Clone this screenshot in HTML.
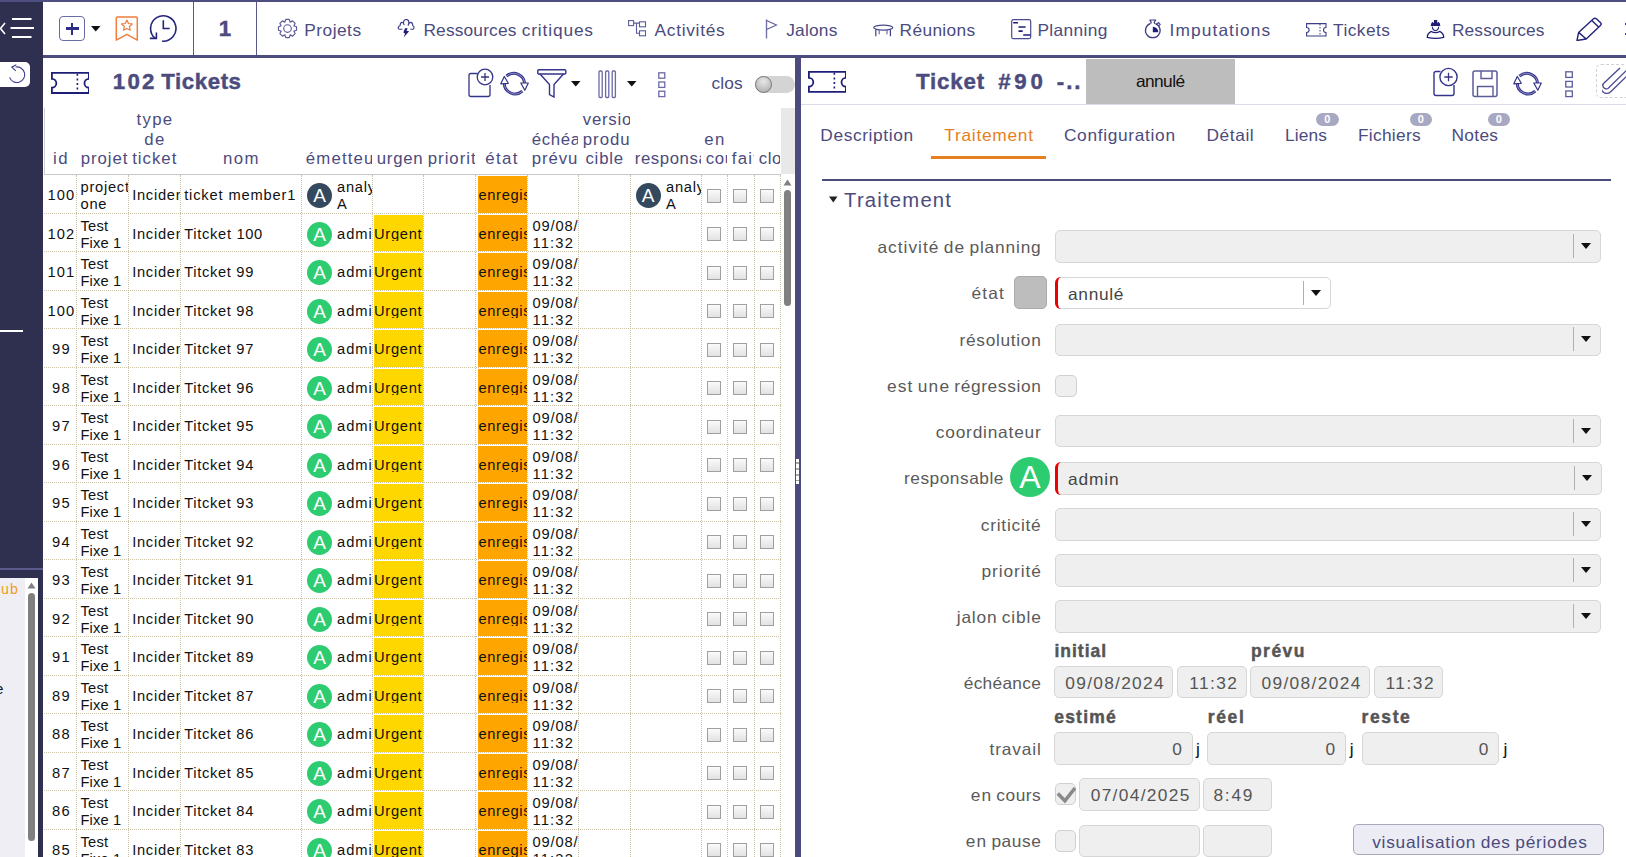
<!DOCTYPE html>
<html><head><meta charset="utf-8"><style>
*{box-sizing:border-box}
html,body{margin:0;padding:0}
body{width:1626px;height:857px;overflow:hidden;position:relative;background:#fff;font-family:"Liberation Sans",sans-serif}
.ab{position:absolute}
.tx{position:absolute;white-space:nowrap}
.clip{position:absolute;overflow:hidden;white-space:nowrap}
.inp{position:absolute;background:#efefef;border:1px solid #d6d6d6;border-radius:5px}
.dd{position:absolute;width:1px;background:#b4b4b4}
.tri{position:absolute;width:0;height:0;border-left:5px solid transparent;border-right:5px solid transparent;border-top:6px solid #111}
.cb{position:absolute;width:14px;height:14px;border:1px solid #a0a0a0;background:linear-gradient(#fafafa,#e2e2e2)}
.av{position:absolute;border-radius:50%;color:#fff;text-align:center;font-family:"Liberation Sans",sans-serif}
</style></head><body>
<div class="ab" style="left:0px;top:0px;width:43px;height:857px;background:#2f2f50"></div>
<div class="ab" style="left:0px;top:0px;width:1626px;height:2px;background:#4e4e80"></div>
<div class="ab" style="left:43px;top:55px;width:1583px;height:3px;background:#4b4b7e"></div>
<div class="ab" style="left:193px;top:2px;width:1.1999999999999886px;height:53px;background:#5a5a8a"></div>
<div class="ab" style="left:256px;top:2px;width:1.1999999999999886px;height:53px;background:#5a5a8a"></div>
<svg class="ab" style="left:0px;top:18px" width="36" height="22" viewBox="0 0 36 22" fill="none"><path d="M5 5 L0.5 10.5 L5 16" stroke="#fff" stroke-width="1.6"/><path d="M12 1 H31.5 M10.5 10 H34 M12 19 H31.5" stroke="#fff" stroke-width="2"/></svg>
<div class="ab" style="left:-5px;top:62px;width:35px;height:25px;background:#fff;border-radius:5px"></div>
<svg class="ab" style="left:7px;top:64px" width="20" height="22" viewBox="0 0 20 22" fill="none"><path d="M2.6 13.4 A7.8 7.8 0 1 0 8.6 3" stroke="#3f3f8f" stroke-width="1.1"/><path d="M9.3 0.8 L4.8 3.2 L8.8 6.8" stroke="#3f3f8f" stroke-width="1.1"/></svg>
<div class="ab" style="left:0px;top:329.5px;width:23px;height:2.0px;background:#fff"></div>
<div class="ab" style="left:0px;top:568px;width:43px;height:2px;background:#5a5a8c"></div>
<div class="ab" style="left:0px;top:578px;width:38px;height:279px;background:#efeef5"></div>
<div class="ab" style="left:25px;top:578px;width:13px;height:279px;background:#fff"></div>
<svg class="ab" style="left:27px;top:582px" width="9" height="7" viewBox="0 0 9 7" fill="none"><path d="M0.5 6.5 L4.5 0.5 L8.5 6.5Z" fill="#808080"/></svg>
<div class="ab" style="left:28.3px;top:593px;width:6.699999999999999px;height:248px;background:#808080;border-radius:4px"></div>
<div class="tx" style="left:0.90px;top:582.20px;font-size:14.18px;line-height:14.18px;color:#f39c12;letter-spacing:1.336px;">ub</div>
<div class="tx" style="left:-4.57px;top:681.60px;font-size:14.18px;line-height:14.18px;color:#111;letter-spacing:0.000px;">e</div>
<div class="ab" style="left:59px;top:16px;width:26px;height:24.5px;border:1.5px solid #6b6ba6;border-radius:4px"></div>
<div class="ab" style="left:66px;top:27.3px;width:12.5px;height:2.3999999999999986px;background:#2d2d85"></div>
<div class="ab" style="left:71px;top:22.5px;width:2.4000000000000057px;height:12.0px;background:#2d2d85"></div>
<svg class="ab" style="left:91px;top:26px" width="10" height="6" viewBox="0 0 10 6" fill="none"><path d="M0 0 H9.5 L4.75 5.5Z" fill="#111"/></svg>
<svg class="ab" style="left:115px;top:15px" width="24" height="27" viewBox="0 0 24 27" fill="none"><path d="M1.3 3 Q1.3 1.9 2.4 1.9 H21.2 Q22.3 1.9 22.3 3 V25.2 L11.9 19.4 L1.3 25.2 Z" stroke="#f07d3e" stroke-width="1.5" stroke-linejoin="round"/><path d="M11.90 5.10 L13.49 8.52 L17.23 8.97 L14.47 11.53 L15.19 15.23 L11.90 13.40 L8.61 15.23 L9.33 11.53 L6.57 8.97 L10.31 8.52 Z" stroke="#f07d3e" stroke-width="1.2" stroke-linejoin="round"/></svg>
<svg class="ab" style="left:149px;top:14px" width="30" height="29" viewBox="0 0 30 29" fill="none"><path d="M13.2 27.15 A12.7 12.7 0 1 0 6.14 24.23" stroke="#23237a" stroke-width="1.6"/><path d="M14.3 6.3 V14.5 H20.7" stroke="#23237a" stroke-width="1.6"/><path d="M7.4 18.6 V24.4 H0.8" stroke="#23237a" stroke-width="1.6"/></svg>
<div class="tx" style="left:218.82px;top:18.16px;font-size:22.26px;line-height:22.26px;color:#4b4b7e;letter-spacing:0.000px;font-weight:bold;-webkit-text-stroke:0.45px #4b4b7e;">1</div>
<div class="tx" style="left:304.30px;top:21.74px;font-size:17.32px;line-height:17.32px;color:#4b4b7e;letter-spacing:0.482px;">Projets</div>
<div class="tx" style="left:423.40px;top:21.74px;font-size:17.32px;line-height:17.32px;color:#4b4b7e;letter-spacing:0.181px;">Ressources</div>
<div class="tx" style="left:521.75px;top:21.74px;font-size:17.32px;line-height:17.32px;color:#4b4b7e;letter-spacing:0.851px;">critiques</div>
<div class="tx" style="left:654.60px;top:21.74px;font-size:17.32px;line-height:17.32px;color:#4b4b7e;letter-spacing:0.703px;">Activités</div>
<div class="tx" style="left:786.20px;top:21.74px;font-size:17.32px;line-height:17.32px;color:#4b4b7e;letter-spacing:0.229px;">Jalons</div>
<div class="tx" style="left:899.60px;top:21.74px;font-size:17.32px;line-height:17.32px;color:#4b4b7e;letter-spacing:0.346px;">Réunions</div>
<div class="tx" style="left:1037.40px;top:21.74px;font-size:17.32px;line-height:17.32px;color:#4b4b7e;letter-spacing:0.383px;">Planning</div>
<div class="tx" style="left:1169.50px;top:21.74px;font-size:17.32px;line-height:17.32px;color:#4b4b7e;letter-spacing:1.116px;">Imputations</div>
<div class="tx" style="left:1333.10px;top:21.74px;font-size:17.32px;line-height:17.32px;color:#4b4b7e;letter-spacing:0.448px;">Tickets</div>
<div class="tx" style="left:1452.00px;top:21.74px;font-size:17.32px;line-height:17.32px;color:#4b4b7e;letter-spacing:0.117px;">Ressources</div>
<svg class="ab" style="left:276.5px;top:18.4px" width="21" height="21" viewBox="0 0 21 21" fill="none"><path d="M7.80 4.15 L8.74 1.47 L12.26 1.47 L13.20 4.15 L13.08 4.10 L15.64 2.87 L18.13 5.36 L16.90 7.92 L16.85 7.80 L19.53 8.74 L19.53 12.26 L16.85 13.20 L16.90 13.08 L18.13 15.64 L15.64 18.13 L13.08 16.90 L13.20 16.85 L12.26 19.53 L8.74 19.53 L7.80 16.85 L7.92 16.90 L5.36 18.13 L2.87 15.64 L4.10 13.08 L4.15 13.20 L1.47 12.26 L1.47 8.74 L4.15 7.80 L4.10 7.92 L2.87 5.36 L5.36 2.87 L7.92 4.10 Z" stroke="#5c5c9a" stroke-width="1.2" stroke-linejoin="round"/><circle cx="10.5" cy="10.5" r="3.8" stroke="#5c5c9a" stroke-width="1.15"/></svg>
<svg class="ab" style="left:397px;top:19px" width="18" height="20" viewBox="0 0 18 20" fill="none"><path d="M5.4 10.2 H2.2 Q1.2 10.2 1.2 8.6 Q1.3 7 3 6.8 Q3.3 3.3 5 3.3 Q6.5 3.4 7.3 6.2 M6.5 4.2 Q6.6 0.5 9.2 0.5 Q11.8 0.5 11.9 3.6 L11.2 6.2 Q12.3 3.3 13.8 3.4 Q15.6 3.6 15.8 6.8 Q17 7 17 8.6 Q17 10.2 16 10.2 H13.3" stroke="#3d3d85" stroke-width="1.15" stroke-linejoin="round"/><path d="M8.05 9.2 H10.7 L9.45 11.8 L12.1 12.15 L6.65 18.45 L8.05 14.6 L6.3 13.55 Z" fill="#1e1e78"/></svg>
<svg class="ab" style="left:628px;top:20px" width="20" height="17" viewBox="0 0 20 17" fill="none"><rect x="0.6" y="0.6" width="5" height="5" stroke="#5c5c9a" stroke-width="1.1"/><rect x="11.5" y="1.8" width="6" height="5" stroke="#5c5c9a" stroke-width="1.1"/><rect x="11.5" y="10.8" width="6" height="5" stroke="#5c5c9a" stroke-width="1.1"/><path d="M5.6 3.1 H11.5 M8.5 3.1 V13.3 H11.5" stroke="#5c5c9a" stroke-width="1.1"/></svg>
<svg class="ab" style="left:765px;top:19px" width="13" height="20" viewBox="0 0 13 20" fill="none"><path d="M1.5 0.5 V19.5" stroke="#7373a8" stroke-width="1.4"/><path d="M1.5 1.5 L11.5 6 L1.5 10.5" stroke="#5c5c9a" stroke-width="1.1"/></svg>
<svg class="ab" style="left:873px;top:23.5px" width="21" height="14" viewBox="0 0 21 14" fill="none"><ellipse cx="10.2" cy="3.6" rx="9.6" ry="2.5" stroke="#4a4a90" stroke-width="1.2"/><path d="M2.8 5.5 V12.3 M17.4 5.5 V12.3" stroke="#3d3d85" stroke-width="1.2"/><path d="M6.2 6 V10.2 M14 6 V10.2" stroke="#6a6aa6" stroke-width="1.2"/></svg>
<svg class="ab" style="left:1011px;top:19px" width="21" height="21" viewBox="0 0 21 21" fill="none"><rect x="0.7" y="0.7" width="19" height="19" rx="1.8" stroke="#4a4a90" stroke-width="1.2"/><path d="M2.2 3.75 H7 M7.5 7.95 H14.6 M7.5 12.15 H11.7 M12.2 16 H19.4" stroke="#1e1e78" stroke-width="1.6"/></svg>
<svg class="ab" style="left:1144px;top:19px" width="18" height="22" viewBox="0 0 18 22" fill="none"><path d="M6.2 4.6 A7.3 7.3 0 1 0 11.4 4.6" stroke="#3d3d85" stroke-width="1.3"/><path d="M5.6 1 H11.8 L10.2 3.2 L10.8 4.8 M5.6 1 L7.2 3.2 L6.6 4.8" stroke="#3d3d85" stroke-width="1.2" stroke-linejoin="round"/><path d="M12.5 5.2 L14.6 3.6 L16.2 5.4 L14.4 7.2" stroke="#4a4a90" stroke-width="1.1"/><path d="M8.8 13.2 V7.7 A5.5 5.5 0 0 1 14.3 13.2 Z" fill="#1e1e78"/></svg>
<svg class="ab" style="left:1305.5px;top:22.5px" width="21" height="14" viewBox="0 0 21 14" fill="none"><path d="M0.6 0.6 H20 V4.5 A2.5 2.5 0 0 0 20 9.5 V13 H0.6 V9.5 A2.5 2.5 0 0 0 0.6 4.5 Z" stroke="#3d3d85" stroke-width="1.1"/><path d="M14 1 V13" stroke="#3d3d85" stroke-width="1" stroke-dasharray="1.5 1.5"/></svg>
<svg class="ab" style="left:1425.5px;top:19px" width="19" height="21" viewBox="0 0 19 21" fill="none"><path d="M4.6 7 H14.4 Q14.2 3.6 12.3 2.7 L11.2 4.2 V0.9 H8 V4.2 L6.8 2.7 Q4.9 3.6 4.6 7 Z" fill="#1e1e78"/><path d="M6.3 7.6 Q6.7 11.4 9.5 11.6 Q12.3 11.4 12.7 7.6" stroke="#2b2b80" stroke-width="1.1"/><path d="M1.3 18.4 Q1.2 14.2 5.4 12.4 Q7 13.6 9.5 13.6 Q12 13.6 13.6 12.4 Q17.8 14.2 17.7 18.4 Q9.5 20.2 1.3 18.4 Z" stroke="#1e1e78" stroke-width="1.3" stroke-linejoin="round"/></svg>
<svg class="ab" style="left:1576px;top:16px" width="27" height="25" viewBox="0 0 27 25" fill="none"><path d="M1 24.5 L2.6 16.4 L17.5 2.8 Q19 1.5 20.4 2.8 L24.6 6.8 Q25.8 8.2 24.4 9.6 L10.2 23 Z M2.6 16.4 L10.2 23 M15.8 4.4 L22.9 11.3" stroke="#23237a" stroke-width="1.4" stroke-linejoin="round"/></svg>
<div class="ab" style="left:1624.6px;top:22.5px;width:1.400000000000091px;height:2.5px;background:#3d3d85"></div>
<div class="ab" style="left:1624.6px;top:32.5px;width:1.400000000000091px;height:2.5px;background:#3d3d85"></div>
<svg class="ab" style="left:50.6px;top:71.8px" width="38.8" height="21.9" viewBox="0 0 38.8 21.9" fill="none"><path d="M0.9 0.9 H37.9 V6.90 A4.43 4.43 0 0 0 37.9 15.77 V21.0 H0.9 V15.77 A4.43 4.43 0 0 0 0.9 6.90 Z" stroke="#1e1e78" stroke-width="1.8"/><path d="M26.38 1.8 V20.099999999999998" stroke="#1e1e78" stroke-width="1.62" stroke-dasharray="2 2.6"/></svg>
<div class="tx" style="left:112.80px;top:70.66px;font-size:22.26px;line-height:22.26px;color:#4b4b7e;letter-spacing:2.210px;font-weight:bold;-webkit-text-stroke:0.45px #4b4b7e;">102</div>
<div class="tx" style="left:161.27px;top:70.66px;font-size:22.26px;line-height:22.26px;color:#4b4b7e;letter-spacing:0.575px;font-weight:bold;-webkit-text-stroke:0.45px #4b4b7e;">Tickets</div>
<svg class="ab" style="left:468px;top:68px" width="26" height="30" viewBox="0 0 26 30" fill="none"><path d="M9.5 5.5 H3 A2 2 0 0 0 1 7.5 V26.5 A2 2 0 0 0 3 28.5 H20 A2 2 0 0 0 22 26.5 V17" stroke="#34348a" stroke-width="1.3"/><circle cx="17" cy="9" r="7.8" fill="#fff" stroke="#34348a" stroke-width="1.3"/><path d="M17 5 V13 M13 9 H21" stroke="#34348a" stroke-width="1.3"/></svg>
<svg class="ab" style="left:500px;top:70px" width="29" height="27" viewBox="0 0 29 27" fill="none"><path d="M6.5 6.2 A10.8 10.8 0 0 1 24.6 14.5" stroke="#34348a" stroke-width="3"/><path d="M6.5 6.2 A10.8 10.8 0 0 1 24.6 14.5" stroke="#9a9ad0" stroke-width="0.9"/><path d="M22.3 21.2 A10.8 10.8 0 0 1 4.4 12" stroke="#34348a" stroke-width="3"/><path d="M22.3 21.2 A10.8 10.8 0 0 1 4.4 12" stroke="#9a9ad0" stroke-width="0.9"/><path d="M0.8 13.8 L4.3 6.5 L8.3 13.3 Z" fill="#fff" stroke="#34348a" stroke-width="1.2" stroke-linejoin="round"/><path d="M20.8 13 L28.3 13 L24.8 20.2 Z" fill="#fff" stroke="#34348a" stroke-width="1.2" stroke-linejoin="round"/></svg>
<svg class="ab" style="left:536.5px;top:69px" width="30" height="29" viewBox="0 0 30 29" fill="none"><rect x="0.8" y="0.8" width="28" height="4.2" rx="1" stroke="#34348a" stroke-width="1.4"/><path d="M3 5 L12.5 15.5 V25.5 L17 28 V15.5 L26.5 5" stroke="#34348a" stroke-width="1.4"/></svg>
<svg class="ab" style="left:571px;top:81px" width="10" height="6" viewBox="0 0 10 6" fill="none"><path d="M0 0 H9.5 L4.75 5.5Z" fill="#111"/></svg>
<svg class="ab" style="left:597.5px;top:70px" width="19" height="29" viewBox="0 0 19 29" fill="none"><rect x="1" y="1" width="3.2" height="26.5" rx="1" stroke="#6a6aa6" stroke-width="1.3"/><rect x="7.6" y="1" width="3.2" height="26.5" rx="1" stroke="#6a6aa6" stroke-width="1.3"/><rect x="14.2" y="1" width="3.2" height="26.5" rx="1" stroke="#6a6aa6" stroke-width="1.3"/></svg>
<svg class="ab" style="left:626.5px;top:81px" width="10" height="6" viewBox="0 0 10 6" fill="none"><path d="M0 0 H9.5 L4.75 5.5Z" fill="#111"/></svg>
<svg class="ab" style="left:657.5px;top:71.5px" width="8" height="26" viewBox="0 0 8 26" fill="none"><rect x="0.8" y="0.8" width="6" height="5.4" stroke="#6a6aa6" stroke-width="1.3"/><rect x="0.8" y="10" width="6" height="5.4" stroke="#6a6aa6" stroke-width="1.3"/><rect x="0.8" y="19.2" width="6" height="5.4" stroke="#6a6aa6" stroke-width="1.3"/></svg>
<div class="tx" style="left:711.50px;top:75.04px;font-size:17.32px;line-height:17.32px;color:#4b4b7e;letter-spacing:0.138px;">clos</div>
<div class="ab" style="left:755px;top:76px;width:40px;height:17px;background:#d4d4d4;border-radius:9px"></div>
<div class="ab" style="left:755px;top:76px;width:17px;height:17px;background:radial-gradient(circle at 50% 30%,#e8e8e8,#a8a8a8);border:1px solid #777;border-radius:50%"></div>
<div class="ab" style="left:44px;top:107.7px;width:1px;height:67.3px;background:#d0d0d0"></div>
<div class="ab" style="left:44px;top:173.5px;width:737px;height:1.5px;background:#c8c8c8"></div>
<div class="ab" style="left:781px;top:107.7px;width:14px;height:66.3px;background:#e8e8e8"></div>
<div class="tx" style="left:53.00px;top:151.38px;font-size:16.8px;line-height:16.8px;color:#4b4b7e;letter-spacing:1.538px;">id</div>
<div class="clip" style="left:77.0px;width:51.0px;top:151.38px;font-size:16.8px;line-height:16.8px;color:#4b4b7e;letter-spacing:0.936px;text-align:left;padding-left:3.80px;">projet</div>
<div class="tx" style="left:136.42px;top:112.08px;font-size:16.8px;line-height:16.8px;color:#4b4b7e;letter-spacing:1.336px;">type</div>
<div class="tx" style="left:144.30px;top:131.78px;font-size:16.8px;line-height:16.8px;color:#4b4b7e;letter-spacing:1.310px;">de</div>
<div class="tx" style="left:132.14px;top:151.38px;font-size:16.8px;line-height:16.8px;color:#4b4b7e;letter-spacing:1.018px;">ticket</div>
<div class="tx" style="left:223.04px;top:151.38px;font-size:16.8px;line-height:16.8px;color:#4b4b7e;letter-spacing:1.422px;">nom</div>
<div class="clip" style="left:302.0px;width:70.0px;top:151.38px;font-size:16.8px;line-height:16.8px;color:#4b4b7e;letter-spacing:1.155px;text-align:left;padding-left:3.80px;">émetteur</div>
<div class="clip" style="left:373.0px;width:50.0px;top:151.38px;font-size:16.8px;line-height:16.8px;color:#4b4b7e;letter-spacing:0.745px;text-align:left;padding-left:3.80px;">urgence</div>
<div class="clip" style="left:424.0px;width:51.0px;top:151.38px;font-size:16.8px;line-height:16.8px;color:#4b4b7e;letter-spacing:0.965px;text-align:left;padding-left:3.80px;">priorité</div>
<div class="tx" style="left:485.20px;top:151.38px;font-size:16.8px;line-height:16.8px;color:#4b4b7e;letter-spacing:1.395px;">état</div>
<div class="clip" style="left:528.0px;width:50.0px;top:131.78px;font-size:16.8px;line-height:16.8px;color:#4b4b7e;letter-spacing:0.619px;text-align:left;padding-left:3.80px;">échéance</div>
<div class="clip" style="left:528.0px;width:50.0px;top:151.38px;font-size:16.8px;line-height:16.8px;color:#4b4b7e;letter-spacing:0.863px;text-align:left;padding-left:3.80px;">prévue</div>
<div class="clip" style="left:579.0px;width:51.0px;top:112.08px;font-size:16.8px;line-height:16.8px;color:#4b4b7e;letter-spacing:0.744px;text-align:left;padding-left:3.80px;">version</div>
<div class="clip" style="left:579.0px;width:51.0px;top:131.78px;font-size:16.8px;line-height:16.8px;color:#4b4b7e;letter-spacing:0.972px;text-align:left;padding-left:3.80px;">produit</div>
<div class="tx" style="left:585.46px;top:151.38px;font-size:16.8px;line-height:16.8px;color:#4b4b7e;letter-spacing:0.778px;">cible</div>
<div class="clip" style="left:631.0px;width:70.0px;top:151.38px;font-size:16.8px;line-height:16.8px;color:#4b4b7e;letter-spacing:0.556px;text-align:left;padding-left:3.80px;">responsable</div>
<div class="tx" style="left:704.30px;top:131.78px;font-size:16.8px;line-height:16.8px;color:#4b4b7e;letter-spacing:1.310px;">en</div>
<div class="clip" style="left:702.0px;width:25.0px;top:151.38px;font-size:16.8px;line-height:16.8px;color:#4b4b7e;letter-spacing:0.641px;text-align:left;padding-left:3.80px;">cours</div>
<div class="clip" style="left:728.0px;width:26.0px;top:151.38px;font-size:16.8px;line-height:16.8px;color:#4b4b7e;letter-spacing:1.244px;text-align:left;padding-left:3.80px;">fait</div>
<div class="clip" style="left:755.0px;width:25.0px;top:151.38px;font-size:16.8px;line-height:16.8px;color:#4b4b7e;letter-spacing:0.499px;text-align:left;padding-left:3.80px;">clos</div>
<div class="ab" style="left:44px;top:212.90px;width:737px;height:0;border-top:1px dotted #cdc4a8"></div>
<div class="ab" style="left:44px;top:251.40px;width:737px;height:0;border-top:1px dotted #cdc4a8"></div>
<div class="ab" style="left:44px;top:289.90px;width:737px;height:0;border-top:1px dotted #cdc4a8"></div>
<div class="ab" style="left:44px;top:328.40px;width:737px;height:0;border-top:1px dotted #cdc4a8"></div>
<div class="ab" style="left:44px;top:366.90px;width:737px;height:0;border-top:1px dotted #cdc4a8"></div>
<div class="ab" style="left:44px;top:405.40px;width:737px;height:0;border-top:1px dotted #cdc4a8"></div>
<div class="ab" style="left:44px;top:443.90px;width:737px;height:0;border-top:1px dotted #cdc4a8"></div>
<div class="ab" style="left:44px;top:482.40px;width:737px;height:0;border-top:1px dotted #cdc4a8"></div>
<div class="ab" style="left:44px;top:520.90px;width:737px;height:0;border-top:1px dotted #cdc4a8"></div>
<div class="ab" style="left:44px;top:559.40px;width:737px;height:0;border-top:1px dotted #cdc4a8"></div>
<div class="ab" style="left:44px;top:597.90px;width:737px;height:0;border-top:1px dotted #cdc4a8"></div>
<div class="ab" style="left:44px;top:636.40px;width:737px;height:0;border-top:1px dotted #cdc4a8"></div>
<div class="ab" style="left:44px;top:674.90px;width:737px;height:0;border-top:1px dotted #cdc4a8"></div>
<div class="ab" style="left:44px;top:713.40px;width:737px;height:0;border-top:1px dotted #cdc4a8"></div>
<div class="ab" style="left:44px;top:751.90px;width:737px;height:0;border-top:1px dotted #cdc4a8"></div>
<div class="ab" style="left:44px;top:790.40px;width:737px;height:0;border-top:1px dotted #cdc4a8"></div>
<div class="ab" style="left:44px;top:828.90px;width:737px;height:0;border-top:1px dotted #cdc4a8"></div>
<div class="ab" style="left:76.0px;top:175px;width:0;height:682px;border-left:1px dotted #cdc4a8"></div>
<div class="ab" style="left:128.0px;top:175px;width:0;height:682px;border-left:1px dotted #cdc4a8"></div>
<div class="ab" style="left:180.0px;top:175px;width:0;height:682px;border-left:1px dotted #cdc4a8"></div>
<div class="ab" style="left:301.0px;top:175px;width:0;height:682px;border-left:1px dotted #cdc4a8"></div>
<div class="ab" style="left:372.0px;top:175px;width:0;height:682px;border-left:1px dotted #cdc4a8"></div>
<div class="ab" style="left:423.0px;top:175px;width:0;height:682px;border-left:1px dotted #cdc4a8"></div>
<div class="ab" style="left:475.0px;top:175px;width:0;height:682px;border-left:1px dotted #cdc4a8"></div>
<div class="ab" style="left:527.0px;top:175px;width:0;height:682px;border-left:1px dotted #cdc4a8"></div>
<div class="ab" style="left:578.0px;top:175px;width:0;height:682px;border-left:1px dotted #cdc4a8"></div>
<div class="ab" style="left:630.0px;top:175px;width:0;height:682px;border-left:1px dotted #cdc4a8"></div>
<div class="ab" style="left:701.0px;top:175px;width:0;height:682px;border-left:1px dotted #cdc4a8"></div>
<div class="ab" style="left:727.0px;top:175px;width:0;height:682px;border-left:1px dotted #cdc4a8"></div>
<div class="ab" style="left:754.0px;top:175px;width:0;height:682px;border-left:1px dotted #cdc4a8"></div>
<div class="ab" style="left:780.0px;top:175px;width:0;height:682px;border-left:1px dotted #cdc4a8"></div>
<div class="tx" style="left:47.43px;top:188.26px;font-size:14.7px;line-height:14.7px;color:#111;letter-spacing:1.114px;">100</div>
<div class="clip" style="left:77.0px;width:51.0px;top:180.06px;font-size:14.7px;line-height:14.7px;color:#111;letter-spacing:0.741px;text-align:left;padding-left:3.50px;">project</div>
<div class="clip" style="left:77.0px;width:51.0px;top:197.06px;font-size:14.7px;line-height:14.7px;color:#111;letter-spacing:0.764px;text-align:left;padding-left:3.50px;">one</div>
<div class="clip" style="left:129.0px;width:51.0px;top:188.26px;font-size:14.7px;line-height:14.7px;color:#111;letter-spacing:0.710px;text-align:left;padding-left:3.20px;">Incident</div>
<div class="clip" style="left:181.0px;width:120.0px;top:188.26px;font-size:14.7px;line-height:14.7px;color:#111;letter-spacing:0.833px;text-align:left;padding-left:3.20px;">ticket member1</div>
<div class="av" style="left:307.00px;top:183.00px;width:25px;height:25px;background:#34495e;font-size:19px;line-height:25px">A</div>
<div class="clip" style="left:302.0px;width:70.0px;top:180.06px;font-size:14.7px;line-height:14.7px;color:#111;letter-spacing:0.739px;text-align:left;padding-left:35.00px;">analyst</div>
<div class="clip" style="left:302.0px;width:70.0px;top:197.06px;font-size:14.7px;line-height:14.7px;color:#111;letter-spacing:0.000px;text-align:left;padding-left:35.00px;">A</div>
<div class="ab" style="left:478px;top:176px;width:49px;height:37px;background:#ffa500"></div>
<div class="clip" style="left:476.0px;width:51.0px;top:188.26px;font-size:14.7px;line-height:14.7px;color:#111;letter-spacing:0.642px;text-align:left;padding-left:2.50px;">enregistré</div>
<div class="av" style="left:635.50px;top:183.00px;width:25px;height:25px;background:#34495e;font-size:19px;line-height:25px">A</div>
<div class="clip" style="left:631.0px;width:70.0px;top:180.06px;font-size:14.7px;line-height:14.7px;color:#111;letter-spacing:0.739px;text-align:left;padding-left:35.00px;">analyst</div>
<div class="clip" style="left:631.0px;width:70.0px;top:197.06px;font-size:14.7px;line-height:14.7px;color:#111;letter-spacing:0.000px;text-align:left;padding-left:35.00px;">A</div>
<div class="cb" style="left:707px;top:188.90px"></div>
<div class="cb" style="left:733px;top:188.90px"></div>
<div class="cb" style="left:760px;top:188.90px"></div>
<div class="tx" style="left:47.43px;top:226.76px;font-size:14.7px;line-height:14.7px;color:#111;letter-spacing:1.114px;">102</div>
<div class="clip" style="left:77.0px;width:51.0px;top:218.56px;font-size:14.7px;line-height:14.7px;color:#111;letter-spacing:0.225px;text-align:left;padding-left:3.50px;">Test</div>
<div class="clip" style="left:77.0px;width:51.0px;top:235.56px;font-size:14.7px;line-height:14.7px;color:#111;letter-spacing:0.144px;text-align:left;padding-left:3.50px;">Fixe 1</div>
<div class="clip" style="left:129.0px;width:51.0px;top:226.76px;font-size:14.7px;line-height:14.7px;color:#111;letter-spacing:0.710px;text-align:left;padding-left:3.20px;">Incident</div>
<div class="clip" style="left:181.0px;width:120.0px;top:226.76px;font-size:14.7px;line-height:14.7px;color:#111;letter-spacing:0.679px;text-align:left;padding-left:3.20px;">Titcket 100</div>
<div class="av" style="left:307.00px;top:221.50px;width:25px;height:25px;background:#2ecc71;font-size:19px;line-height:25px">A</div>
<div class="clip" style="left:302.0px;width:70.0px;top:226.76px;font-size:14.7px;line-height:14.7px;color:#111;letter-spacing:0.959px;text-align:left;padding-left:35.00px;">admin</div>
<div class="ab" style="left:374px;top:215px;width:49px;height:36px;background:#ffd700"></div>
<div class="clip" style="left:373.0px;width:50.0px;top:226.76px;font-size:14.7px;line-height:14.7px;color:#111;letter-spacing:0.700px;text-align:left;padding-left:1.00px;">Urgent</div>
<div class="ab" style="left:478px;top:215px;width:49px;height:36px;background:#ffa500"></div>
<div class="clip" style="left:476.0px;width:51.0px;top:226.76px;font-size:14.7px;line-height:14.7px;color:#111;letter-spacing:0.642px;text-align:left;padding-left:2.50px;">enregistré</div>
<div class="clip" style="left:528.0px;width:50.0px;top:218.56px;font-size:14.7px;line-height:14.7px;color:#111;letter-spacing:0.835px;text-align:left;padding-left:4.50px;">09/08/</div>
<div class="clip" style="left:528.0px;width:50.0px;top:235.56px;font-size:14.7px;line-height:14.7px;color:#111;letter-spacing:1.168px;text-align:left;padding-left:4.50px;">11:32</div>
<div class="cb" style="left:707px;top:227.40px"></div>
<div class="cb" style="left:733px;top:227.40px"></div>
<div class="cb" style="left:760px;top:227.40px"></div>
<div class="tx" style="left:47.43px;top:265.26px;font-size:14.7px;line-height:14.7px;color:#111;letter-spacing:1.114px;">101</div>
<div class="clip" style="left:77.0px;width:51.0px;top:257.06px;font-size:14.7px;line-height:14.7px;color:#111;letter-spacing:0.225px;text-align:left;padding-left:3.50px;">Test</div>
<div class="clip" style="left:77.0px;width:51.0px;top:274.06px;font-size:14.7px;line-height:14.7px;color:#111;letter-spacing:0.144px;text-align:left;padding-left:3.50px;">Fixe 1</div>
<div class="clip" style="left:129.0px;width:51.0px;top:265.26px;font-size:14.7px;line-height:14.7px;color:#111;letter-spacing:0.710px;text-align:left;padding-left:3.20px;">Incident</div>
<div class="clip" style="left:181.0px;width:120.0px;top:265.26px;font-size:14.7px;line-height:14.7px;color:#111;letter-spacing:0.673px;text-align:left;padding-left:3.20px;">Titcket 99</div>
<div class="av" style="left:307.00px;top:260.00px;width:25px;height:25px;background:#2ecc71;font-size:19px;line-height:25px">A</div>
<div class="clip" style="left:302.0px;width:70.0px;top:265.26px;font-size:14.7px;line-height:14.7px;color:#111;letter-spacing:0.959px;text-align:left;padding-left:35.00px;">admin</div>
<div class="ab" style="left:374px;top:253px;width:49px;height:37px;background:#ffd700"></div>
<div class="clip" style="left:373.0px;width:50.0px;top:265.26px;font-size:14.7px;line-height:14.7px;color:#111;letter-spacing:0.700px;text-align:left;padding-left:1.00px;">Urgent</div>
<div class="ab" style="left:478px;top:253px;width:49px;height:37px;background:#ffa500"></div>
<div class="clip" style="left:476.0px;width:51.0px;top:265.26px;font-size:14.7px;line-height:14.7px;color:#111;letter-spacing:0.642px;text-align:left;padding-left:2.50px;">enregistré</div>
<div class="clip" style="left:528.0px;width:50.0px;top:257.06px;font-size:14.7px;line-height:14.7px;color:#111;letter-spacing:0.835px;text-align:left;padding-left:4.50px;">09/08/</div>
<div class="clip" style="left:528.0px;width:50.0px;top:274.06px;font-size:14.7px;line-height:14.7px;color:#111;letter-spacing:1.168px;text-align:left;padding-left:4.50px;">11:32</div>
<div class="cb" style="left:707px;top:265.90px"></div>
<div class="cb" style="left:733px;top:265.90px"></div>
<div class="cb" style="left:760px;top:265.90px"></div>
<div class="tx" style="left:47.43px;top:303.76px;font-size:14.7px;line-height:14.7px;color:#111;letter-spacing:1.114px;">100</div>
<div class="clip" style="left:77.0px;width:51.0px;top:295.56px;font-size:14.7px;line-height:14.7px;color:#111;letter-spacing:0.225px;text-align:left;padding-left:3.50px;">Test</div>
<div class="clip" style="left:77.0px;width:51.0px;top:312.56px;font-size:14.7px;line-height:14.7px;color:#111;letter-spacing:0.144px;text-align:left;padding-left:3.50px;">Fixe 1</div>
<div class="clip" style="left:129.0px;width:51.0px;top:303.76px;font-size:14.7px;line-height:14.7px;color:#111;letter-spacing:0.710px;text-align:left;padding-left:3.20px;">Incident</div>
<div class="clip" style="left:181.0px;width:120.0px;top:303.76px;font-size:14.7px;line-height:14.7px;color:#111;letter-spacing:0.673px;text-align:left;padding-left:3.20px;">Titcket 98</div>
<div class="av" style="left:307.00px;top:298.50px;width:25px;height:25px;background:#2ecc71;font-size:19px;line-height:25px">A</div>
<div class="clip" style="left:302.0px;width:70.0px;top:303.76px;font-size:14.7px;line-height:14.7px;color:#111;letter-spacing:0.959px;text-align:left;padding-left:35.00px;">admin</div>
<div class="ab" style="left:374px;top:292px;width:49px;height:36px;background:#ffd700"></div>
<div class="clip" style="left:373.0px;width:50.0px;top:303.76px;font-size:14.7px;line-height:14.7px;color:#111;letter-spacing:0.700px;text-align:left;padding-left:1.00px;">Urgent</div>
<div class="ab" style="left:478px;top:292px;width:49px;height:36px;background:#ffa500"></div>
<div class="clip" style="left:476.0px;width:51.0px;top:303.76px;font-size:14.7px;line-height:14.7px;color:#111;letter-spacing:0.642px;text-align:left;padding-left:2.50px;">enregistré</div>
<div class="clip" style="left:528.0px;width:50.0px;top:295.56px;font-size:14.7px;line-height:14.7px;color:#111;letter-spacing:0.835px;text-align:left;padding-left:4.50px;">09/08/</div>
<div class="clip" style="left:528.0px;width:50.0px;top:312.56px;font-size:14.7px;line-height:14.7px;color:#111;letter-spacing:1.168px;text-align:left;padding-left:4.50px;">11:32</div>
<div class="cb" style="left:707px;top:304.40px"></div>
<div class="cb" style="left:733px;top:304.40px"></div>
<div class="cb" style="left:760px;top:304.40px"></div>
<div class="tx" style="left:51.89px;top:342.26px;font-size:14.7px;line-height:14.7px;color:#111;letter-spacing:1.461px;">99</div>
<div class="clip" style="left:77.0px;width:51.0px;top:334.06px;font-size:14.7px;line-height:14.7px;color:#111;letter-spacing:0.225px;text-align:left;padding-left:3.50px;">Test</div>
<div class="clip" style="left:77.0px;width:51.0px;top:351.06px;font-size:14.7px;line-height:14.7px;color:#111;letter-spacing:0.144px;text-align:left;padding-left:3.50px;">Fixe 1</div>
<div class="clip" style="left:129.0px;width:51.0px;top:342.26px;font-size:14.7px;line-height:14.7px;color:#111;letter-spacing:0.710px;text-align:left;padding-left:3.20px;">Incident</div>
<div class="clip" style="left:181.0px;width:120.0px;top:342.26px;font-size:14.7px;line-height:14.7px;color:#111;letter-spacing:0.673px;text-align:left;padding-left:3.20px;">Titcket 97</div>
<div class="av" style="left:307.00px;top:337.00px;width:25px;height:25px;background:#2ecc71;font-size:19px;line-height:25px">A</div>
<div class="clip" style="left:302.0px;width:70.0px;top:342.26px;font-size:14.7px;line-height:14.7px;color:#111;letter-spacing:0.959px;text-align:left;padding-left:35.00px;">admin</div>
<div class="ab" style="left:374px;top:330px;width:49px;height:37px;background:#ffd700"></div>
<div class="clip" style="left:373.0px;width:50.0px;top:342.26px;font-size:14.7px;line-height:14.7px;color:#111;letter-spacing:0.700px;text-align:left;padding-left:1.00px;">Urgent</div>
<div class="ab" style="left:478px;top:330px;width:49px;height:37px;background:#ffa500"></div>
<div class="clip" style="left:476.0px;width:51.0px;top:342.26px;font-size:14.7px;line-height:14.7px;color:#111;letter-spacing:0.642px;text-align:left;padding-left:2.50px;">enregistré</div>
<div class="clip" style="left:528.0px;width:50.0px;top:334.06px;font-size:14.7px;line-height:14.7px;color:#111;letter-spacing:0.835px;text-align:left;padding-left:4.50px;">09/08/</div>
<div class="clip" style="left:528.0px;width:50.0px;top:351.06px;font-size:14.7px;line-height:14.7px;color:#111;letter-spacing:1.168px;text-align:left;padding-left:4.50px;">11:32</div>
<div class="cb" style="left:707px;top:342.90px"></div>
<div class="cb" style="left:733px;top:342.90px"></div>
<div class="cb" style="left:760px;top:342.90px"></div>
<div class="tx" style="left:51.89px;top:380.76px;font-size:14.7px;line-height:14.7px;color:#111;letter-spacing:1.461px;">98</div>
<div class="clip" style="left:77.0px;width:51.0px;top:372.56px;font-size:14.7px;line-height:14.7px;color:#111;letter-spacing:0.225px;text-align:left;padding-left:3.50px;">Test</div>
<div class="clip" style="left:77.0px;width:51.0px;top:389.56px;font-size:14.7px;line-height:14.7px;color:#111;letter-spacing:0.144px;text-align:left;padding-left:3.50px;">Fixe 1</div>
<div class="clip" style="left:129.0px;width:51.0px;top:380.76px;font-size:14.7px;line-height:14.7px;color:#111;letter-spacing:0.710px;text-align:left;padding-left:3.20px;">Incident</div>
<div class="clip" style="left:181.0px;width:120.0px;top:380.76px;font-size:14.7px;line-height:14.7px;color:#111;letter-spacing:0.673px;text-align:left;padding-left:3.20px;">Titcket 96</div>
<div class="av" style="left:307.00px;top:375.50px;width:25px;height:25px;background:#2ecc71;font-size:19px;line-height:25px">A</div>
<div class="clip" style="left:302.0px;width:70.0px;top:380.76px;font-size:14.7px;line-height:14.7px;color:#111;letter-spacing:0.959px;text-align:left;padding-left:35.00px;">admin</div>
<div class="ab" style="left:374px;top:369px;width:49px;height:36px;background:#ffd700"></div>
<div class="clip" style="left:373.0px;width:50.0px;top:380.76px;font-size:14.7px;line-height:14.7px;color:#111;letter-spacing:0.700px;text-align:left;padding-left:1.00px;">Urgent</div>
<div class="ab" style="left:478px;top:369px;width:49px;height:36px;background:#ffa500"></div>
<div class="clip" style="left:476.0px;width:51.0px;top:380.76px;font-size:14.7px;line-height:14.7px;color:#111;letter-spacing:0.642px;text-align:left;padding-left:2.50px;">enregistré</div>
<div class="clip" style="left:528.0px;width:50.0px;top:372.56px;font-size:14.7px;line-height:14.7px;color:#111;letter-spacing:0.835px;text-align:left;padding-left:4.50px;">09/08/</div>
<div class="clip" style="left:528.0px;width:50.0px;top:389.56px;font-size:14.7px;line-height:14.7px;color:#111;letter-spacing:1.168px;text-align:left;padding-left:4.50px;">11:32</div>
<div class="cb" style="left:707px;top:381.40px"></div>
<div class="cb" style="left:733px;top:381.40px"></div>
<div class="cb" style="left:760px;top:381.40px"></div>
<div class="tx" style="left:51.89px;top:419.26px;font-size:14.7px;line-height:14.7px;color:#111;letter-spacing:1.461px;">97</div>
<div class="clip" style="left:77.0px;width:51.0px;top:411.06px;font-size:14.7px;line-height:14.7px;color:#111;letter-spacing:0.225px;text-align:left;padding-left:3.50px;">Test</div>
<div class="clip" style="left:77.0px;width:51.0px;top:428.06px;font-size:14.7px;line-height:14.7px;color:#111;letter-spacing:0.144px;text-align:left;padding-left:3.50px;">Fixe 1</div>
<div class="clip" style="left:129.0px;width:51.0px;top:419.26px;font-size:14.7px;line-height:14.7px;color:#111;letter-spacing:0.710px;text-align:left;padding-left:3.20px;">Incident</div>
<div class="clip" style="left:181.0px;width:120.0px;top:419.26px;font-size:14.7px;line-height:14.7px;color:#111;letter-spacing:0.673px;text-align:left;padding-left:3.20px;">Titcket 95</div>
<div class="av" style="left:307.00px;top:414.00px;width:25px;height:25px;background:#2ecc71;font-size:19px;line-height:25px">A</div>
<div class="clip" style="left:302.0px;width:70.0px;top:419.26px;font-size:14.7px;line-height:14.7px;color:#111;letter-spacing:0.959px;text-align:left;padding-left:35.00px;">admin</div>
<div class="ab" style="left:374px;top:407px;width:49px;height:37px;background:#ffd700"></div>
<div class="clip" style="left:373.0px;width:50.0px;top:419.26px;font-size:14.7px;line-height:14.7px;color:#111;letter-spacing:0.700px;text-align:left;padding-left:1.00px;">Urgent</div>
<div class="ab" style="left:478px;top:407px;width:49px;height:37px;background:#ffa500"></div>
<div class="clip" style="left:476.0px;width:51.0px;top:419.26px;font-size:14.7px;line-height:14.7px;color:#111;letter-spacing:0.642px;text-align:left;padding-left:2.50px;">enregistré</div>
<div class="clip" style="left:528.0px;width:50.0px;top:411.06px;font-size:14.7px;line-height:14.7px;color:#111;letter-spacing:0.835px;text-align:left;padding-left:4.50px;">09/08/</div>
<div class="clip" style="left:528.0px;width:50.0px;top:428.06px;font-size:14.7px;line-height:14.7px;color:#111;letter-spacing:1.168px;text-align:left;padding-left:4.50px;">11:32</div>
<div class="cb" style="left:707px;top:419.90px"></div>
<div class="cb" style="left:733px;top:419.90px"></div>
<div class="cb" style="left:760px;top:419.90px"></div>
<div class="tx" style="left:51.89px;top:457.76px;font-size:14.7px;line-height:14.7px;color:#111;letter-spacing:1.461px;">96</div>
<div class="clip" style="left:77.0px;width:51.0px;top:449.56px;font-size:14.7px;line-height:14.7px;color:#111;letter-spacing:0.225px;text-align:left;padding-left:3.50px;">Test</div>
<div class="clip" style="left:77.0px;width:51.0px;top:466.56px;font-size:14.7px;line-height:14.7px;color:#111;letter-spacing:0.144px;text-align:left;padding-left:3.50px;">Fixe 1</div>
<div class="clip" style="left:129.0px;width:51.0px;top:457.76px;font-size:14.7px;line-height:14.7px;color:#111;letter-spacing:0.710px;text-align:left;padding-left:3.20px;">Incident</div>
<div class="clip" style="left:181.0px;width:120.0px;top:457.76px;font-size:14.7px;line-height:14.7px;color:#111;letter-spacing:0.673px;text-align:left;padding-left:3.20px;">Titcket 94</div>
<div class="av" style="left:307.00px;top:452.50px;width:25px;height:25px;background:#2ecc71;font-size:19px;line-height:25px">A</div>
<div class="clip" style="left:302.0px;width:70.0px;top:457.76px;font-size:14.7px;line-height:14.7px;color:#111;letter-spacing:0.959px;text-align:left;padding-left:35.00px;">admin</div>
<div class="ab" style="left:374px;top:446px;width:49px;height:36px;background:#ffd700"></div>
<div class="clip" style="left:373.0px;width:50.0px;top:457.76px;font-size:14.7px;line-height:14.7px;color:#111;letter-spacing:0.700px;text-align:left;padding-left:1.00px;">Urgent</div>
<div class="ab" style="left:478px;top:446px;width:49px;height:36px;background:#ffa500"></div>
<div class="clip" style="left:476.0px;width:51.0px;top:457.76px;font-size:14.7px;line-height:14.7px;color:#111;letter-spacing:0.642px;text-align:left;padding-left:2.50px;">enregistré</div>
<div class="clip" style="left:528.0px;width:50.0px;top:449.56px;font-size:14.7px;line-height:14.7px;color:#111;letter-spacing:0.835px;text-align:left;padding-left:4.50px;">09/08/</div>
<div class="clip" style="left:528.0px;width:50.0px;top:466.56px;font-size:14.7px;line-height:14.7px;color:#111;letter-spacing:1.168px;text-align:left;padding-left:4.50px;">11:32</div>
<div class="cb" style="left:707px;top:458.40px"></div>
<div class="cb" style="left:733px;top:458.40px"></div>
<div class="cb" style="left:760px;top:458.40px"></div>
<div class="tx" style="left:51.89px;top:496.26px;font-size:14.7px;line-height:14.7px;color:#111;letter-spacing:1.461px;">95</div>
<div class="clip" style="left:77.0px;width:51.0px;top:488.06px;font-size:14.7px;line-height:14.7px;color:#111;letter-spacing:0.225px;text-align:left;padding-left:3.50px;">Test</div>
<div class="clip" style="left:77.0px;width:51.0px;top:505.06px;font-size:14.7px;line-height:14.7px;color:#111;letter-spacing:0.144px;text-align:left;padding-left:3.50px;">Fixe 1</div>
<div class="clip" style="left:129.0px;width:51.0px;top:496.26px;font-size:14.7px;line-height:14.7px;color:#111;letter-spacing:0.710px;text-align:left;padding-left:3.20px;">Incident</div>
<div class="clip" style="left:181.0px;width:120.0px;top:496.26px;font-size:14.7px;line-height:14.7px;color:#111;letter-spacing:0.673px;text-align:left;padding-left:3.20px;">Titcket 93</div>
<div class="av" style="left:307.00px;top:491.00px;width:25px;height:25px;background:#2ecc71;font-size:19px;line-height:25px">A</div>
<div class="clip" style="left:302.0px;width:70.0px;top:496.26px;font-size:14.7px;line-height:14.7px;color:#111;letter-spacing:0.959px;text-align:left;padding-left:35.00px;">admin</div>
<div class="ab" style="left:374px;top:484px;width:49px;height:37px;background:#ffd700"></div>
<div class="clip" style="left:373.0px;width:50.0px;top:496.26px;font-size:14.7px;line-height:14.7px;color:#111;letter-spacing:0.700px;text-align:left;padding-left:1.00px;">Urgent</div>
<div class="ab" style="left:478px;top:484px;width:49px;height:37px;background:#ffa500"></div>
<div class="clip" style="left:476.0px;width:51.0px;top:496.26px;font-size:14.7px;line-height:14.7px;color:#111;letter-spacing:0.642px;text-align:left;padding-left:2.50px;">enregistré</div>
<div class="clip" style="left:528.0px;width:50.0px;top:488.06px;font-size:14.7px;line-height:14.7px;color:#111;letter-spacing:0.835px;text-align:left;padding-left:4.50px;">09/08/</div>
<div class="clip" style="left:528.0px;width:50.0px;top:505.06px;font-size:14.7px;line-height:14.7px;color:#111;letter-spacing:1.168px;text-align:left;padding-left:4.50px;">11:32</div>
<div class="cb" style="left:707px;top:496.90px"></div>
<div class="cb" style="left:733px;top:496.90px"></div>
<div class="cb" style="left:760px;top:496.90px"></div>
<div class="tx" style="left:51.89px;top:534.76px;font-size:14.7px;line-height:14.7px;color:#111;letter-spacing:1.461px;">94</div>
<div class="clip" style="left:77.0px;width:51.0px;top:526.56px;font-size:14.7px;line-height:14.7px;color:#111;letter-spacing:0.225px;text-align:left;padding-left:3.50px;">Test</div>
<div class="clip" style="left:77.0px;width:51.0px;top:543.56px;font-size:14.7px;line-height:14.7px;color:#111;letter-spacing:0.144px;text-align:left;padding-left:3.50px;">Fixe 1</div>
<div class="clip" style="left:129.0px;width:51.0px;top:534.76px;font-size:14.7px;line-height:14.7px;color:#111;letter-spacing:0.710px;text-align:left;padding-left:3.20px;">Incident</div>
<div class="clip" style="left:181.0px;width:120.0px;top:534.76px;font-size:14.7px;line-height:14.7px;color:#111;letter-spacing:0.673px;text-align:left;padding-left:3.20px;">Titcket 92</div>
<div class="av" style="left:307.00px;top:529.50px;width:25px;height:25px;background:#2ecc71;font-size:19px;line-height:25px">A</div>
<div class="clip" style="left:302.0px;width:70.0px;top:534.76px;font-size:14.7px;line-height:14.7px;color:#111;letter-spacing:0.959px;text-align:left;padding-left:35.00px;">admin</div>
<div class="ab" style="left:374px;top:523px;width:49px;height:36px;background:#ffd700"></div>
<div class="clip" style="left:373.0px;width:50.0px;top:534.76px;font-size:14.7px;line-height:14.7px;color:#111;letter-spacing:0.700px;text-align:left;padding-left:1.00px;">Urgent</div>
<div class="ab" style="left:478px;top:523px;width:49px;height:36px;background:#ffa500"></div>
<div class="clip" style="left:476.0px;width:51.0px;top:534.76px;font-size:14.7px;line-height:14.7px;color:#111;letter-spacing:0.642px;text-align:left;padding-left:2.50px;">enregistré</div>
<div class="clip" style="left:528.0px;width:50.0px;top:526.56px;font-size:14.7px;line-height:14.7px;color:#111;letter-spacing:0.835px;text-align:left;padding-left:4.50px;">09/08/</div>
<div class="clip" style="left:528.0px;width:50.0px;top:543.56px;font-size:14.7px;line-height:14.7px;color:#111;letter-spacing:1.168px;text-align:left;padding-left:4.50px;">11:32</div>
<div class="cb" style="left:707px;top:535.40px"></div>
<div class="cb" style="left:733px;top:535.40px"></div>
<div class="cb" style="left:760px;top:535.40px"></div>
<div class="tx" style="left:51.89px;top:573.26px;font-size:14.7px;line-height:14.7px;color:#111;letter-spacing:1.461px;">93</div>
<div class="clip" style="left:77.0px;width:51.0px;top:565.06px;font-size:14.7px;line-height:14.7px;color:#111;letter-spacing:0.225px;text-align:left;padding-left:3.50px;">Test</div>
<div class="clip" style="left:77.0px;width:51.0px;top:582.06px;font-size:14.7px;line-height:14.7px;color:#111;letter-spacing:0.144px;text-align:left;padding-left:3.50px;">Fixe 1</div>
<div class="clip" style="left:129.0px;width:51.0px;top:573.26px;font-size:14.7px;line-height:14.7px;color:#111;letter-spacing:0.710px;text-align:left;padding-left:3.20px;">Incident</div>
<div class="clip" style="left:181.0px;width:120.0px;top:573.26px;font-size:14.7px;line-height:14.7px;color:#111;letter-spacing:0.673px;text-align:left;padding-left:3.20px;">Titcket 91</div>
<div class="av" style="left:307.00px;top:568.00px;width:25px;height:25px;background:#2ecc71;font-size:19px;line-height:25px">A</div>
<div class="clip" style="left:302.0px;width:70.0px;top:573.26px;font-size:14.7px;line-height:14.7px;color:#111;letter-spacing:0.959px;text-align:left;padding-left:35.00px;">admin</div>
<div class="ab" style="left:374px;top:561px;width:49px;height:37px;background:#ffd700"></div>
<div class="clip" style="left:373.0px;width:50.0px;top:573.26px;font-size:14.7px;line-height:14.7px;color:#111;letter-spacing:0.700px;text-align:left;padding-left:1.00px;">Urgent</div>
<div class="ab" style="left:478px;top:561px;width:49px;height:37px;background:#ffa500"></div>
<div class="clip" style="left:476.0px;width:51.0px;top:573.26px;font-size:14.7px;line-height:14.7px;color:#111;letter-spacing:0.642px;text-align:left;padding-left:2.50px;">enregistré</div>
<div class="clip" style="left:528.0px;width:50.0px;top:565.06px;font-size:14.7px;line-height:14.7px;color:#111;letter-spacing:0.835px;text-align:left;padding-left:4.50px;">09/08/</div>
<div class="clip" style="left:528.0px;width:50.0px;top:582.06px;font-size:14.7px;line-height:14.7px;color:#111;letter-spacing:1.168px;text-align:left;padding-left:4.50px;">11:32</div>
<div class="cb" style="left:707px;top:573.90px"></div>
<div class="cb" style="left:733px;top:573.90px"></div>
<div class="cb" style="left:760px;top:573.90px"></div>
<div class="tx" style="left:51.89px;top:611.76px;font-size:14.7px;line-height:14.7px;color:#111;letter-spacing:1.461px;">92</div>
<div class="clip" style="left:77.0px;width:51.0px;top:603.56px;font-size:14.7px;line-height:14.7px;color:#111;letter-spacing:0.225px;text-align:left;padding-left:3.50px;">Test</div>
<div class="clip" style="left:77.0px;width:51.0px;top:620.56px;font-size:14.7px;line-height:14.7px;color:#111;letter-spacing:0.144px;text-align:left;padding-left:3.50px;">Fixe 1</div>
<div class="clip" style="left:129.0px;width:51.0px;top:611.76px;font-size:14.7px;line-height:14.7px;color:#111;letter-spacing:0.710px;text-align:left;padding-left:3.20px;">Incident</div>
<div class="clip" style="left:181.0px;width:120.0px;top:611.76px;font-size:14.7px;line-height:14.7px;color:#111;letter-spacing:0.673px;text-align:left;padding-left:3.20px;">Titcket 90</div>
<div class="av" style="left:307.00px;top:606.50px;width:25px;height:25px;background:#2ecc71;font-size:19px;line-height:25px">A</div>
<div class="clip" style="left:302.0px;width:70.0px;top:611.76px;font-size:14.7px;line-height:14.7px;color:#111;letter-spacing:0.959px;text-align:left;padding-left:35.00px;">admin</div>
<div class="ab" style="left:374px;top:600px;width:49px;height:36px;background:#ffd700"></div>
<div class="clip" style="left:373.0px;width:50.0px;top:611.76px;font-size:14.7px;line-height:14.7px;color:#111;letter-spacing:0.700px;text-align:left;padding-left:1.00px;">Urgent</div>
<div class="ab" style="left:478px;top:600px;width:49px;height:36px;background:#ffa500"></div>
<div class="clip" style="left:476.0px;width:51.0px;top:611.76px;font-size:14.7px;line-height:14.7px;color:#111;letter-spacing:0.642px;text-align:left;padding-left:2.50px;">enregistré</div>
<div class="clip" style="left:528.0px;width:50.0px;top:603.56px;font-size:14.7px;line-height:14.7px;color:#111;letter-spacing:0.835px;text-align:left;padding-left:4.50px;">09/08/</div>
<div class="clip" style="left:528.0px;width:50.0px;top:620.56px;font-size:14.7px;line-height:14.7px;color:#111;letter-spacing:1.168px;text-align:left;padding-left:4.50px;">11:32</div>
<div class="cb" style="left:707px;top:612.40px"></div>
<div class="cb" style="left:733px;top:612.40px"></div>
<div class="cb" style="left:760px;top:612.40px"></div>
<div class="tx" style="left:51.89px;top:650.26px;font-size:14.7px;line-height:14.7px;color:#111;letter-spacing:1.461px;">91</div>
<div class="clip" style="left:77.0px;width:51.0px;top:642.06px;font-size:14.7px;line-height:14.7px;color:#111;letter-spacing:0.225px;text-align:left;padding-left:3.50px;">Test</div>
<div class="clip" style="left:77.0px;width:51.0px;top:659.06px;font-size:14.7px;line-height:14.7px;color:#111;letter-spacing:0.144px;text-align:left;padding-left:3.50px;">Fixe 1</div>
<div class="clip" style="left:129.0px;width:51.0px;top:650.26px;font-size:14.7px;line-height:14.7px;color:#111;letter-spacing:0.710px;text-align:left;padding-left:3.20px;">Incident</div>
<div class="clip" style="left:181.0px;width:120.0px;top:650.26px;font-size:14.7px;line-height:14.7px;color:#111;letter-spacing:0.673px;text-align:left;padding-left:3.20px;">Titcket 89</div>
<div class="av" style="left:307.00px;top:645.00px;width:25px;height:25px;background:#2ecc71;font-size:19px;line-height:25px">A</div>
<div class="clip" style="left:302.0px;width:70.0px;top:650.26px;font-size:14.7px;line-height:14.7px;color:#111;letter-spacing:0.959px;text-align:left;padding-left:35.00px;">admin</div>
<div class="ab" style="left:374px;top:638px;width:49px;height:37px;background:#ffd700"></div>
<div class="clip" style="left:373.0px;width:50.0px;top:650.26px;font-size:14.7px;line-height:14.7px;color:#111;letter-spacing:0.700px;text-align:left;padding-left:1.00px;">Urgent</div>
<div class="ab" style="left:478px;top:638px;width:49px;height:37px;background:#ffa500"></div>
<div class="clip" style="left:476.0px;width:51.0px;top:650.26px;font-size:14.7px;line-height:14.7px;color:#111;letter-spacing:0.642px;text-align:left;padding-left:2.50px;">enregistré</div>
<div class="clip" style="left:528.0px;width:50.0px;top:642.06px;font-size:14.7px;line-height:14.7px;color:#111;letter-spacing:0.835px;text-align:left;padding-left:4.50px;">09/08/</div>
<div class="clip" style="left:528.0px;width:50.0px;top:659.06px;font-size:14.7px;line-height:14.7px;color:#111;letter-spacing:1.168px;text-align:left;padding-left:4.50px;">11:32</div>
<div class="cb" style="left:707px;top:650.90px"></div>
<div class="cb" style="left:733px;top:650.90px"></div>
<div class="cb" style="left:760px;top:650.90px"></div>
<div class="tx" style="left:51.89px;top:688.76px;font-size:14.7px;line-height:14.7px;color:#111;letter-spacing:1.461px;">89</div>
<div class="clip" style="left:77.0px;width:51.0px;top:680.56px;font-size:14.7px;line-height:14.7px;color:#111;letter-spacing:0.225px;text-align:left;padding-left:3.50px;">Test</div>
<div class="clip" style="left:77.0px;width:51.0px;top:697.56px;font-size:14.7px;line-height:14.7px;color:#111;letter-spacing:0.144px;text-align:left;padding-left:3.50px;">Fixe 1</div>
<div class="clip" style="left:129.0px;width:51.0px;top:688.76px;font-size:14.7px;line-height:14.7px;color:#111;letter-spacing:0.710px;text-align:left;padding-left:3.20px;">Incident</div>
<div class="clip" style="left:181.0px;width:120.0px;top:688.76px;font-size:14.7px;line-height:14.7px;color:#111;letter-spacing:0.673px;text-align:left;padding-left:3.20px;">Titcket 87</div>
<div class="av" style="left:307.00px;top:683.50px;width:25px;height:25px;background:#2ecc71;font-size:19px;line-height:25px">A</div>
<div class="clip" style="left:302.0px;width:70.0px;top:688.76px;font-size:14.7px;line-height:14.7px;color:#111;letter-spacing:0.959px;text-align:left;padding-left:35.00px;">admin</div>
<div class="ab" style="left:374px;top:677px;width:49px;height:36px;background:#ffd700"></div>
<div class="clip" style="left:373.0px;width:50.0px;top:688.76px;font-size:14.7px;line-height:14.7px;color:#111;letter-spacing:0.700px;text-align:left;padding-left:1.00px;">Urgent</div>
<div class="ab" style="left:478px;top:677px;width:49px;height:36px;background:#ffa500"></div>
<div class="clip" style="left:476.0px;width:51.0px;top:688.76px;font-size:14.7px;line-height:14.7px;color:#111;letter-spacing:0.642px;text-align:left;padding-left:2.50px;">enregistré</div>
<div class="clip" style="left:528.0px;width:50.0px;top:680.56px;font-size:14.7px;line-height:14.7px;color:#111;letter-spacing:0.835px;text-align:left;padding-left:4.50px;">09/08/</div>
<div class="clip" style="left:528.0px;width:50.0px;top:697.56px;font-size:14.7px;line-height:14.7px;color:#111;letter-spacing:1.168px;text-align:left;padding-left:4.50px;">11:32</div>
<div class="cb" style="left:707px;top:689.40px"></div>
<div class="cb" style="left:733px;top:689.40px"></div>
<div class="cb" style="left:760px;top:689.40px"></div>
<div class="tx" style="left:51.89px;top:727.26px;font-size:14.7px;line-height:14.7px;color:#111;letter-spacing:1.461px;">88</div>
<div class="clip" style="left:77.0px;width:51.0px;top:719.06px;font-size:14.7px;line-height:14.7px;color:#111;letter-spacing:0.225px;text-align:left;padding-left:3.50px;">Test</div>
<div class="clip" style="left:77.0px;width:51.0px;top:736.06px;font-size:14.7px;line-height:14.7px;color:#111;letter-spacing:0.144px;text-align:left;padding-left:3.50px;">Fixe 1</div>
<div class="clip" style="left:129.0px;width:51.0px;top:727.26px;font-size:14.7px;line-height:14.7px;color:#111;letter-spacing:0.710px;text-align:left;padding-left:3.20px;">Incident</div>
<div class="clip" style="left:181.0px;width:120.0px;top:727.26px;font-size:14.7px;line-height:14.7px;color:#111;letter-spacing:0.673px;text-align:left;padding-left:3.20px;">Titcket 86</div>
<div class="av" style="left:307.00px;top:722.00px;width:25px;height:25px;background:#2ecc71;font-size:19px;line-height:25px">A</div>
<div class="clip" style="left:302.0px;width:70.0px;top:727.26px;font-size:14.7px;line-height:14.7px;color:#111;letter-spacing:0.959px;text-align:left;padding-left:35.00px;">admin</div>
<div class="ab" style="left:374px;top:715px;width:49px;height:37px;background:#ffd700"></div>
<div class="clip" style="left:373.0px;width:50.0px;top:727.26px;font-size:14.7px;line-height:14.7px;color:#111;letter-spacing:0.700px;text-align:left;padding-left:1.00px;">Urgent</div>
<div class="ab" style="left:478px;top:715px;width:49px;height:37px;background:#ffa500"></div>
<div class="clip" style="left:476.0px;width:51.0px;top:727.26px;font-size:14.7px;line-height:14.7px;color:#111;letter-spacing:0.642px;text-align:left;padding-left:2.50px;">enregistré</div>
<div class="clip" style="left:528.0px;width:50.0px;top:719.06px;font-size:14.7px;line-height:14.7px;color:#111;letter-spacing:0.835px;text-align:left;padding-left:4.50px;">09/08/</div>
<div class="clip" style="left:528.0px;width:50.0px;top:736.06px;font-size:14.7px;line-height:14.7px;color:#111;letter-spacing:1.168px;text-align:left;padding-left:4.50px;">11:32</div>
<div class="cb" style="left:707px;top:727.90px"></div>
<div class="cb" style="left:733px;top:727.90px"></div>
<div class="cb" style="left:760px;top:727.90px"></div>
<div class="tx" style="left:51.89px;top:765.76px;font-size:14.7px;line-height:14.7px;color:#111;letter-spacing:1.461px;">87</div>
<div class="clip" style="left:77.0px;width:51.0px;top:757.56px;font-size:14.7px;line-height:14.7px;color:#111;letter-spacing:0.225px;text-align:left;padding-left:3.50px;">Test</div>
<div class="clip" style="left:77.0px;width:51.0px;top:774.56px;font-size:14.7px;line-height:14.7px;color:#111;letter-spacing:0.144px;text-align:left;padding-left:3.50px;">Fixe 1</div>
<div class="clip" style="left:129.0px;width:51.0px;top:765.76px;font-size:14.7px;line-height:14.7px;color:#111;letter-spacing:0.710px;text-align:left;padding-left:3.20px;">Incident</div>
<div class="clip" style="left:181.0px;width:120.0px;top:765.76px;font-size:14.7px;line-height:14.7px;color:#111;letter-spacing:0.673px;text-align:left;padding-left:3.20px;">Titcket 85</div>
<div class="av" style="left:307.00px;top:760.50px;width:25px;height:25px;background:#2ecc71;font-size:19px;line-height:25px">A</div>
<div class="clip" style="left:302.0px;width:70.0px;top:765.76px;font-size:14.7px;line-height:14.7px;color:#111;letter-spacing:0.959px;text-align:left;padding-left:35.00px;">admin</div>
<div class="ab" style="left:374px;top:754px;width:49px;height:36px;background:#ffd700"></div>
<div class="clip" style="left:373.0px;width:50.0px;top:765.76px;font-size:14.7px;line-height:14.7px;color:#111;letter-spacing:0.700px;text-align:left;padding-left:1.00px;">Urgent</div>
<div class="ab" style="left:478px;top:754px;width:49px;height:36px;background:#ffa500"></div>
<div class="clip" style="left:476.0px;width:51.0px;top:765.76px;font-size:14.7px;line-height:14.7px;color:#111;letter-spacing:0.642px;text-align:left;padding-left:2.50px;">enregistré</div>
<div class="clip" style="left:528.0px;width:50.0px;top:757.56px;font-size:14.7px;line-height:14.7px;color:#111;letter-spacing:0.835px;text-align:left;padding-left:4.50px;">09/08/</div>
<div class="clip" style="left:528.0px;width:50.0px;top:774.56px;font-size:14.7px;line-height:14.7px;color:#111;letter-spacing:1.168px;text-align:left;padding-left:4.50px;">11:32</div>
<div class="cb" style="left:707px;top:766.40px"></div>
<div class="cb" style="left:733px;top:766.40px"></div>
<div class="cb" style="left:760px;top:766.40px"></div>
<div class="tx" style="left:51.89px;top:804.26px;font-size:14.7px;line-height:14.7px;color:#111;letter-spacing:1.461px;">86</div>
<div class="clip" style="left:77.0px;width:51.0px;top:796.06px;font-size:14.7px;line-height:14.7px;color:#111;letter-spacing:0.225px;text-align:left;padding-left:3.50px;">Test</div>
<div class="clip" style="left:77.0px;width:51.0px;top:813.06px;font-size:14.7px;line-height:14.7px;color:#111;letter-spacing:0.144px;text-align:left;padding-left:3.50px;">Fixe 1</div>
<div class="clip" style="left:129.0px;width:51.0px;top:804.26px;font-size:14.7px;line-height:14.7px;color:#111;letter-spacing:0.710px;text-align:left;padding-left:3.20px;">Incident</div>
<div class="clip" style="left:181.0px;width:120.0px;top:804.26px;font-size:14.7px;line-height:14.7px;color:#111;letter-spacing:0.673px;text-align:left;padding-left:3.20px;">Titcket 84</div>
<div class="av" style="left:307.00px;top:799.00px;width:25px;height:25px;background:#2ecc71;font-size:19px;line-height:25px">A</div>
<div class="clip" style="left:302.0px;width:70.0px;top:804.26px;font-size:14.7px;line-height:14.7px;color:#111;letter-spacing:0.959px;text-align:left;padding-left:35.00px;">admin</div>
<div class="ab" style="left:374px;top:792px;width:49px;height:37px;background:#ffd700"></div>
<div class="clip" style="left:373.0px;width:50.0px;top:804.26px;font-size:14.7px;line-height:14.7px;color:#111;letter-spacing:0.700px;text-align:left;padding-left:1.00px;">Urgent</div>
<div class="ab" style="left:478px;top:792px;width:49px;height:37px;background:#ffa500"></div>
<div class="clip" style="left:476.0px;width:51.0px;top:804.26px;font-size:14.7px;line-height:14.7px;color:#111;letter-spacing:0.642px;text-align:left;padding-left:2.50px;">enregistré</div>
<div class="clip" style="left:528.0px;width:50.0px;top:796.06px;font-size:14.7px;line-height:14.7px;color:#111;letter-spacing:0.835px;text-align:left;padding-left:4.50px;">09/08/</div>
<div class="clip" style="left:528.0px;width:50.0px;top:813.06px;font-size:14.7px;line-height:14.7px;color:#111;letter-spacing:1.168px;text-align:left;padding-left:4.50px;">11:32</div>
<div class="cb" style="left:707px;top:804.90px"></div>
<div class="cb" style="left:733px;top:804.90px"></div>
<div class="cb" style="left:760px;top:804.90px"></div>
<div class="tx" style="left:51.89px;top:842.76px;font-size:14.7px;line-height:14.7px;color:#111;letter-spacing:1.461px;">85</div>
<div class="clip" style="left:77.0px;width:51.0px;top:834.56px;font-size:14.7px;line-height:14.7px;color:#111;letter-spacing:0.225px;text-align:left;padding-left:3.50px;">Test</div>
<div class="clip" style="left:77.0px;width:51.0px;top:851.56px;font-size:14.7px;line-height:14.7px;color:#111;letter-spacing:0.144px;text-align:left;padding-left:3.50px;">Fixe 1</div>
<div class="clip" style="left:129.0px;width:51.0px;top:842.76px;font-size:14.7px;line-height:14.7px;color:#111;letter-spacing:0.710px;text-align:left;padding-left:3.20px;">Incident</div>
<div class="clip" style="left:181.0px;width:120.0px;top:842.76px;font-size:14.7px;line-height:14.7px;color:#111;letter-spacing:0.673px;text-align:left;padding-left:3.20px;">Titcket 83</div>
<div class="av" style="left:307.00px;top:837.50px;width:25px;height:25px;background:#2ecc71;font-size:19px;line-height:25px">A</div>
<div class="clip" style="left:302.0px;width:70.0px;top:842.76px;font-size:14.7px;line-height:14.7px;color:#111;letter-spacing:0.959px;text-align:left;padding-left:35.00px;">admin</div>
<div class="ab" style="left:374px;top:831px;width:49px;height:36px;background:#ffd700"></div>
<div class="clip" style="left:373.0px;width:50.0px;top:842.76px;font-size:14.7px;line-height:14.7px;color:#111;letter-spacing:0.700px;text-align:left;padding-left:1.00px;">Urgent</div>
<div class="ab" style="left:478px;top:831px;width:49px;height:36px;background:#ffa500"></div>
<div class="clip" style="left:476.0px;width:51.0px;top:842.76px;font-size:14.7px;line-height:14.7px;color:#111;letter-spacing:0.642px;text-align:left;padding-left:2.50px;">enregistré</div>
<div class="clip" style="left:528.0px;width:50.0px;top:834.56px;font-size:14.7px;line-height:14.7px;color:#111;letter-spacing:0.835px;text-align:left;padding-left:4.50px;">09/08/</div>
<div class="clip" style="left:528.0px;width:50.0px;top:851.56px;font-size:14.7px;line-height:14.7px;color:#111;letter-spacing:1.168px;text-align:left;padding-left:4.50px;">11:32</div>
<div class="cb" style="left:707px;top:843.40px"></div>
<div class="cb" style="left:733px;top:843.40px"></div>
<div class="cb" style="left:760px;top:843.40px"></div>
<svg class="ab" style="left:783px;top:178.5px" width="9" height="7" viewBox="0 0 9 7" fill="none"><path d="M0.5 6.5 L4.5 0.5 L8.5 6.5Z" fill="#808080"/></svg>
<div class="ab" style="left:784.3px;top:189.5px;width:6.7000000000000455px;height:116.5px;background:#808080;border-radius:4px"></div>
<div class="ab" style="left:795px;top:58px;width:6px;height:799px;background:#4b4b7e"></div>
<div class="ab" style="left:796px;top:459.3px;width:3px;height:24.69999999999999px;background:linear-gradient(#fff 0 3px,#aaa 3px 5px,#fff 5px 9px,#aaa 9px 11px,#fff 11px 15px,#aaa 15px 17px,#fff 17px 21px,#999 21px 22px,#fff 22px)"></div>
<svg class="ab" style="left:807.7px;top:71px" width="38.8" height="21.7" viewBox="0 0 38.8 21.7" fill="none"><path d="M0.9 0.9 H37.9 V6.84 A4.39 4.39 0 0 0 37.9 15.62 V20.8 H0.9 V15.62 A4.39 4.39 0 0 0 0.9 6.84 Z" stroke="#1e1e78" stroke-width="1.8"/><path d="M26.38 1.8 V19.9" stroke="#1e1e78" stroke-width="1.62" stroke-dasharray="2 2.6"/></svg>
<div class="tx" style="left:915.90px;top:71.46px;font-size:22.26px;line-height:22.26px;color:#4b4b7e;letter-spacing:0.887px;font-weight:bold;-webkit-text-stroke:0.45px #4b4b7e;">Ticket</div>
<div class="tx" style="left:998.22px;top:71.46px;font-size:22.26px;line-height:22.26px;color:#4b4b7e;letter-spacing:3.781px;font-weight:bold;-webkit-text-stroke:0.45px #4b4b7e;">#90</div>
<div class="tx" style="left:1056.84px;top:71.46px;font-size:22.26px;line-height:22.26px;color:#4b4b7e;letter-spacing:1.894px;font-weight:bold;-webkit-text-stroke:0.45px #4b4b7e;">-..</div>
<div class="ab" style="left:1086px;top:59px;width:149px;height:44.5px;background:#bdbdbd"></div>
<div class="tx" style="left:1135.90px;top:73.14px;font-size:17.32px;line-height:17.32px;color:#111;letter-spacing:-0.561px;">annulé</div>
<div class="ab" style="left:801px;top:103.5px;width:825px;height:1.5px;background:#dcdce8"></div>
<svg class="ab" style="left:1433px;top:67px" width="27" height="30" viewBox="0 0 27 30" fill="none"><path d="M7.5 4.5 H3 A2 2 0 0 0 1 6.5 V26.5 A2 2 0 0 0 3 28.5 H19 A2 2 0 0 0 21 26.5 V18" stroke="#34348a" stroke-width="1.4"/><circle cx="15.5" cy="10" r="8.6" fill="#fff" stroke="#34348a" stroke-width="1.4"/><path d="M15.5 5.8 V14.2 M11.3 10 H19.7" stroke="#34348a" stroke-width="1.3"/></svg>
<svg class="ab" style="left:1472px;top:69.5px" width="26" height="28" viewBox="0 0 26 28" fill="none"><rect x="1" y="1" width="24" height="25.5" rx="2" stroke="#5c5c9a" stroke-width="1.5"/><path d="M9 1 V8.5 H20 V1" stroke="#5c5c9a" stroke-width="1.4"/><path d="M5.5 26.5 V16.5 H21 V26.5" stroke="#5c5c9a" stroke-width="1.4"/></svg>
<svg class="ab" style="left:1513px;top:70px" width="29" height="27" viewBox="0 0 29 27" fill="none"><path d="M6.5 6.2 A10.8 10.8 0 0 1 24.6 14.5" stroke="#34348a" stroke-width="3"/><path d="M6.5 6.2 A10.8 10.8 0 0 1 24.6 14.5" stroke="#9a9ad0" stroke-width="0.9"/><path d="M22.3 21.2 A10.8 10.8 0 0 1 4.4 12" stroke="#34348a" stroke-width="3"/><path d="M22.3 21.2 A10.8 10.8 0 0 1 4.4 12" stroke="#9a9ad0" stroke-width="0.9"/><path d="M0.8 13.8 L4.3 6.5 L8.3 13.3 Z" fill="#fff" stroke="#34348a" stroke-width="1.2" stroke-linejoin="round"/><path d="M20.8 13 L28.3 13 L24.8 20.2 Z" fill="#fff" stroke="#34348a" stroke-width="1.2" stroke-linejoin="round"/></svg>
<svg class="ab" style="left:1565px;top:70.5px" width="9" height="27" viewBox="0 0 9 27" fill="none"><rect x="0.8" y="0.8" width="6.5" height="5.6" stroke="#5c5c9a" stroke-width="1.3"/><rect x="0.8" y="10.4" width="6.5" height="5.6" stroke="#5c5c9a" stroke-width="1.3"/><rect x="0.8" y="20" width="6.5" height="5.6" stroke="#5c5c9a" stroke-width="1.3"/></svg>
<div class="ab" style="left:1596px;top:63.5px;width:44px;height:34.0px;border:1px dashed #d0d0d8;border-radius:5px"></div>
<svg class="ab" style="left:1602px;top:67px" width="24" height="28" viewBox="0 0 24 28" fill="none"><path d="M26 2 L6 21.5 A3.5 3.5 0 0 1 1.5 16.5 L18 1" stroke="#4a4a90" stroke-width="1.3"/><path d="M28 6 L9 24.5 A5.5 5.5 0 0 1 0.6 17" stroke="#4a4a90" stroke-width="1.3"/></svg>
<div class="tx" style="left:820.30px;top:127.04px;font-size:17.32px;line-height:17.32px;color:#4b4b7e;letter-spacing:0.616px;">Description</div>
<div class="tx" style="left:944.30px;top:127.04px;font-size:17.32px;line-height:17.32px;color:#e67e22;letter-spacing:0.729px;">Traitement</div>
<div class="tx" style="left:1063.90px;top:127.04px;font-size:17.32px;line-height:17.32px;color:#4b4b7e;letter-spacing:0.682px;">Configuration</div>
<div class="tx" style="left:1206.50px;top:127.04px;font-size:17.32px;line-height:17.32px;color:#4b4b7e;letter-spacing:0.581px;">Détail</div>
<div class="tx" style="left:1285.00px;top:127.04px;font-size:17.32px;line-height:17.32px;color:#4b4b7e;letter-spacing:0.151px;">Liens</div>
<div class="tx" style="left:1358.00px;top:127.04px;font-size:17.32px;line-height:17.32px;color:#4b4b7e;letter-spacing:0.283px;">Fichiers</div>
<div class="tx" style="left:1451.50px;top:127.04px;font-size:17.32px;line-height:17.32px;color:#4b4b7e;letter-spacing:0.313px;">Notes</div>
<div class="ab" style="left:931px;top:156.3px;width:115px;height:2.6999999999999886px;background:#e67e22"></div>
<div class="ab" style="left:1315.8px;top:113px;width:23.2px;height:12.7px;background:#a8a8c2;border-radius:7px;color:#fff;font-size:11px;line-height:12.7px;text-align:center;font-weight:bold">0</div>
<div class="ab" style="left:1409.6px;top:113px;width:22.4px;height:12.7px;background:#a8a8c2;border-radius:7px;color:#fff;font-size:11px;line-height:12.7px;text-align:center;font-weight:bold">0</div>
<div class="ab" style="left:1487.7px;top:113px;width:22.3px;height:12.7px;background:#a8a8c2;border-radius:7px;color:#fff;font-size:11px;line-height:12.7px;text-align:center;font-weight:bold">0</div>
<div class="ab" style="left:822px;top:179px;width:789px;height:2px;background:#4b4b7e"></div>
<svg class="ab" style="left:828.5px;top:195.5px" width="9" height="7" viewBox="0 0 9 7" fill="none"><path d="M0 0.5 H8.5 L4.25 6.5Z" fill="#222"/></svg>
<div class="tx" style="left:844.10px;top:189.84px;font-size:20.27px;line-height:20.27px;color:#4b4b7e;letter-spacing:1.197px;">Traitement</div>
<div class="inp" style="left:1055px;top:230.2px;width:546.0px;height:32.4px;background:#efefef"></div>
<div class="ab" style="left:1572.5px;top:234.0px;width:1.0px;height:24.100000000000023px;background:#b0b0b0"></div>
<div class="tri" style="left:1580.5px;top:242.9px"></div>
<div class="tx" style="left:877.40px;top:238.94px;font-size:17.32px;line-height:17.32px;color:#5a5a5a;letter-spacing:1.016px;">activité</div>
<div class="tx" style="left:943.64px;top:238.94px;font-size:17.32px;line-height:17.32px;color:#5a5a5a;letter-spacing:1.290px;">de</div>
<div class="tx" style="left:969.43px;top:238.94px;font-size:17.32px;line-height:17.32px;color:#5a5a5a;letter-spacing:0.838px;">planning</div>
<div class="inp" style="left:1055px;top:323.6px;width:546.0px;height:32.0px;background:#efefef"></div>
<div class="ab" style="left:1572.5px;top:327.40000000000003px;width:1.0px;height:23.69999999999999px;background:#b0b0b0"></div>
<div class="tri" style="left:1580.5px;top:336.1px"></div>
<div class="tx" style="left:959.60px;top:332.14px;font-size:17.32px;line-height:17.32px;color:#5a5a5a;letter-spacing:0.680px;">résolution</div>
<div class="inp" style="left:1055px;top:415.4px;width:546.0px;height:31.7px;background:#efefef"></div>
<div class="ab" style="left:1572.5px;top:419.2px;width:1.0px;height:23.400000000000034px;background:#b0b0b0"></div>
<div class="tri" style="left:1580.5px;top:427.8px"></div>
<div class="tx" style="left:935.80px;top:423.79px;font-size:17.32px;line-height:17.32px;color:#5a5a5a;letter-spacing:0.791px;">coordinateur</div>
<div class="inp" style="left:1055px;top:508.2px;width:546.0px;height:32.6px;background:#efefef"></div>
<div class="ab" style="left:1572.5px;top:512.0px;width:1.0px;height:24.299999999999955px;background:#b0b0b0"></div>
<div class="tri" style="left:1580.5px;top:521.0px"></div>
<div class="tx" style="left:980.80px;top:517.04px;font-size:17.32px;line-height:17.32px;color:#5a5a5a;letter-spacing:0.761px;">criticité</div>
<div class="inp" style="left:1055px;top:554.2px;width:546.0px;height:32.6px;background:#efefef"></div>
<div class="ab" style="left:1572.5px;top:558.0px;width:1.0px;height:24.299999999999955px;background:#b0b0b0"></div>
<div class="tri" style="left:1580.5px;top:567.0px"></div>
<div class="tx" style="left:981.50px;top:563.04px;font-size:17.32px;line-height:17.32px;color:#5a5a5a;letter-spacing:0.906px;">priorité</div>
<div class="inp" style="left:1055px;top:600.4px;width:546.0px;height:32.2px;background:#efefef"></div>
<div class="ab" style="left:1572.5px;top:604.1999999999999px;width:1.0px;height:23.90000000000009px;background:#b0b0b0"></div>
<div class="tri" style="left:1580.5px;top:613.0px"></div>
<div class="tx" style="left:956.73px;top:609.04px;font-size:17.32px;line-height:17.32px;color:#5a5a5a;letter-spacing:0.816px;">jalon</div>
<div class="tx" style="left:1001.83px;top:609.04px;font-size:17.32px;line-height:17.32px;color:#5a5a5a;letter-spacing:0.831px;">cible</div>
<div class="tx" style="left:971.40px;top:284.84px;font-size:17.32px;line-height:17.32px;color:#5a5a5a;letter-spacing:1.206px;">état</div>
<div class="ab" style="left:1014px;top:276px;width:33px;height:33px;background:#bdbdbd;border:1px solid #aaa;border-radius:5px"></div>
<div class="inp" style="left:1055px;top:276.7px;width:276.0px;height:32.7px;background:#fff"></div>
<div class="ab" style="left:1055px;top:276.7px;width:12px;height:32.7px;border-left:3px solid #e00;border-radius:6px 0 0 6px"></div>
<div class="ab" style="left:1302.5px;top:280.5px;width:1.0px;height:24.399999999999977px;background:#b0b0b0"></div>
<div class="tri" style="left:1310.5px;top:289.5px"></div>
<div class="tx" style="left:1068.00px;top:285.59px;font-size:17.32px;line-height:17.32px;color:#444;letter-spacing:0.699px;">annulé</div>
<div class="tx" style="left:887.10px;top:377.94px;font-size:17.32px;line-height:17.32px;color:#5a5a5a;letter-spacing:1.123px;">est</div>
<div class="tx" style="left:917.76px;top:377.94px;font-size:17.32px;line-height:17.32px;color:#5a5a5a;letter-spacing:1.191px;">une</div>
<div class="tx" style="left:954.31px;top:377.94px;font-size:17.32px;line-height:17.32px;color:#5a5a5a;letter-spacing:0.627px;">régression</div>
<div class="ab" style="left:1055px;top:375.4px;width:22px;height:21.400000000000034px;background:#efefef;border:1px solid #d0d0d0;border-radius:5px"></div>
<div class="tx" style="left:904.00px;top:469.74px;font-size:17.32px;line-height:17.32px;color:#5a5a5a;letter-spacing:0.505px;">responsable</div>
<div class="inp" style="left:1055px;top:461.8px;width:547.0px;height:32.8px;background:#efefef"></div>
<div class="ab" style="left:1055px;top:461.8px;width:12px;height:32.8px;border-left:3px solid #e00;border-radius:6px 0 0 6px"></div>
<div class="ab" style="left:1573.5px;top:465.6px;width:1.0px;height:24.5px;background:#b0b0b0"></div>
<div class="tri" style="left:1581.5px;top:474.7px"></div>
<div class="tx" style="left:1068.00px;top:470.74px;font-size:17.32px;line-height:17.32px;color:#444;letter-spacing:0.862px;">admin</div>
<div class="av" style="left:1010px;top:457.2px;width:40px;height:40px;background:#2ecc71;font-size:32px;line-height:41px">A</div>
<div class="tx" style="left:1054.40px;top:642.99px;font-size:17.49px;line-height:17.49px;color:#555;letter-spacing:1.018px;font-weight:bold;-webkit-text-stroke:0.45px #555;">initial</div>
<div class="tx" style="left:1250.90px;top:642.79px;font-size:17.49px;line-height:17.49px;color:#555;letter-spacing:1.502px;font-weight:bold;-webkit-text-stroke:0.45px #555;">prévu</div>
<div class="tx" style="left:963.80px;top:674.84px;font-size:17.32px;line-height:17.32px;color:#5a5a5a;letter-spacing:0.268px;">échéance</div>
<div class="inp" style="left:1054.4px;top:666.2px;width:119.0px;height:32.2px"></div>
<div class="tx" style="left:1065.30px;top:674.64px;font-size:17.32px;line-height:17.32px;color:#555;letter-spacing:1.290px;">09/08/2024</div>
<div class="inp" style="left:1177.4px;top:666.2px;width:70.0px;height:32.2px"></div>
<div class="tx" style="left:1189.30px;top:674.64px;font-size:17.32px;line-height:17.32px;color:#555;letter-spacing:1.389px;">11:32</div>
<div class="inp" style="left:1250.3px;top:666.3px;width:119.8px;height:32.0px"></div>
<div class="tx" style="left:1261.50px;top:674.64px;font-size:17.32px;line-height:17.32px;color:#555;letter-spacing:1.346px;">09/08/2024</div>
<div class="inp" style="left:1373.5px;top:666.3px;width:69.7px;height:32.0px"></div>
<div class="tx" style="left:1385.40px;top:674.64px;font-size:17.32px;line-height:17.32px;color:#555;letter-spacing:1.539px;">11:32</div>
<div class="tx" style="left:1054.20px;top:708.79px;font-size:17.49px;line-height:17.49px;color:#555;letter-spacing:1.240px;font-weight:bold;-webkit-text-stroke:0.45px #555;">estimé</div>
<div class="tx" style="left:1207.70px;top:708.79px;font-size:17.49px;line-height:17.49px;color:#555;letter-spacing:1.681px;font-weight:bold;-webkit-text-stroke:0.45px #555;">réel</div>
<div class="tx" style="left:1361.60px;top:708.79px;font-size:17.49px;line-height:17.49px;color:#555;letter-spacing:1.605px;font-weight:bold;-webkit-text-stroke:0.45px #555;">reste</div>
<div class="tx" style="left:989.60px;top:741.14px;font-size:17.32px;line-height:17.32px;color:#5a5a5a;letter-spacing:0.833px;">travail</div>
<div class="inp" style="left:1054.4px;top:732.3px;width:138.4px;height:32.3px"></div>
<div class="tx" style="left:1172.19px;top:740.79px;font-size:17.32px;line-height:17.32px;color:#555;letter-spacing:0.000px;">0</div>
<div class="tx" style="left:1195.93px;top:740.74px;font-size:17.32px;line-height:17.32px;color:#111;letter-spacing:0.000px;">j</div>
<div class="inp" style="left:1207.2px;top:732.3px;width:139.0px;height:32.3px"></div>
<div class="tx" style="left:1325.59px;top:740.79px;font-size:17.32px;line-height:17.32px;color:#555;letter-spacing:0.000px;">0</div>
<div class="tx" style="left:1349.83px;top:740.74px;font-size:17.32px;line-height:17.32px;color:#111;letter-spacing:0.000px;">j</div>
<div class="inp" style="left:1361.6px;top:732.3px;width:137.7px;height:32.3px"></div>
<div class="tx" style="left:1478.69px;top:740.79px;font-size:17.32px;line-height:17.32px;color:#555;letter-spacing:0.000px;">0</div>
<div class="tx" style="left:1503.43px;top:740.74px;font-size:17.32px;line-height:17.32px;color:#111;letter-spacing:0.000px;">j</div>
<div class="tx" style="left:970.80px;top:786.94px;font-size:17.32px;line-height:17.32px;color:#5a5a5a;letter-spacing:1.104px;">en</div>
<div class="tx" style="left:996.34px;top:786.94px;font-size:17.32px;line-height:17.32px;color:#5a5a5a;letter-spacing:0.526px;">cours</div>
<div class="ab" style="left:1055.3px;top:783px;width:21.200000000000045px;height:21.799999999999955px;background:#efefef;border:1px solid #d0d0d0;border-radius:5px"></div>
<svg class="ab" style="left:1055px;top:783px" width="22" height="22" viewBox="0 0 22 22" fill="none"><path d="M2.8 10.6 L9.9 17.8 L20 5" stroke="#8a8a8a" stroke-width="3.6"/></svg>
<div class="inp" style="left:1079.1px;top:778.4px;width:120.5px;height:32.3px"></div>
<div class="tx" style="left:1090.70px;top:786.89px;font-size:17.32px;line-height:17.32px;color:#555;letter-spacing:1.335px;">07/04/2025</div>
<div class="inp" style="left:1203.3px;top:778.4px;width:69.2px;height:32.3px"></div>
<div class="tx" style="left:1213.40px;top:786.89px;font-size:17.32px;line-height:17.32px;color:#555;letter-spacing:1.790px;">8:49</div>
<div class="tx" style="left:965.80px;top:832.94px;font-size:17.32px;line-height:17.32px;color:#5a5a5a;letter-spacing:1.179px;">en</div>
<div class="tx" style="left:991.43px;top:832.94px;font-size:17.32px;line-height:17.32px;color:#5a5a5a;letter-spacing:0.541px;">pause</div>
<div class="ab" style="left:1055.3px;top:830px;width:21.200000000000045px;height:21.700000000000045px;background:#efefef;border:1px solid #d0d0d0;border-radius:5px"></div>
<div class="inp" style="left:1079.1px;top:824.5px;width:120.5px;height:32.1px"></div>
<div class="inp" style="left:1203.3px;top:824.5px;width:69.2px;height:32.1px"></div>
<div class="ab" style="left:1353.1px;top:824.2px;width:251.4px;height:31px;background:#ececf5;border:1px solid #a8a8b8;border-radius:5px"></div>
<div class="tx" style="left:1372.20px;top:833.64px;font-size:17.32px;line-height:17.32px;color:#4b4b7e;letter-spacing:0.745px;">visualisation</div>
<div class="tx" style="left:1480.75px;top:833.64px;font-size:17.32px;line-height:17.32px;color:#4b4b7e;letter-spacing:0.679px;">des</div>
<div class="tx" style="left:1515.31px;top:833.64px;font-size:17.32px;line-height:17.32px;color:#4b4b7e;letter-spacing:0.728px;">périodes</div>
</body></html>
